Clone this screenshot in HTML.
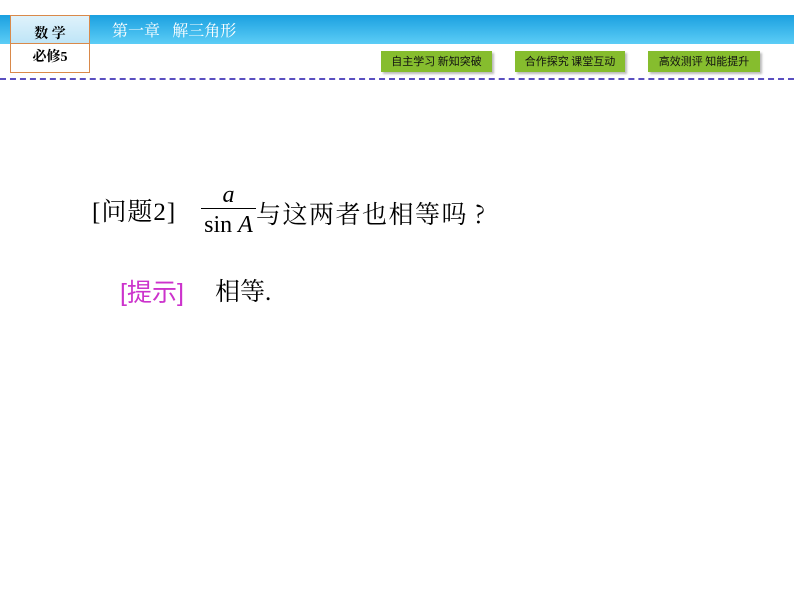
<!DOCTYPE html>
<html><head><meta charset="utf-8"><style>
body{margin:0;width:794px;height:596px;background:#fff;position:relative;overflow:hidden;font-family:"Liberation Serif","Noto Serif CJK SC",serif}
.a{position:absolute;white-space:nowrap}
.bar{left:0;top:15px;width:794px;height:29px;background:linear-gradient(#1ba0e0,#5ccdf6)}
.box{left:10px;top:15px;width:78px;height:56px;border:1px solid #d9894a;background:#fff}
.btn{top:51px;height:21px;background:#86bd2e;font:11px "Noto Sans CJK SC",sans-serif;color:#111;text-align:center;line-height:21px;box-shadow:2px 2px 2px #bbb}
</style></head><body>
<div class="a bar"></div>
<div class="a box">
<div style="height:27px;background:linear-gradient(#dff2fb,#bfe5f7);border-bottom:1px solid #d9894a;text-align:center;font:bold 14px 'Noto Serif CJK SC',serif;line-height:34px">数 学</div>
<div style="text-align:center;font:bold 14px 'Liberation Serif','Noto Serif CJK SC',serif;line-height:28px">必修5</div>
</div>
<div class="a" style="left:112px;top:17px;color:#fff;font:16px 'Noto Serif CJK SC',serif;line-height:26px">第一章&nbsp;&nbsp;&nbsp;解三角形</div>
<div class="a btn" style="left:381px;width:111px">自主学习 新知突破</div>
<div class="a btn" style="left:515px;width:110px">合作探究 课堂互动</div>
<div class="a btn" style="left:648px;width:112px">高效测评 知能提升</div>
<div class="a" style="left:0;top:78px;width:794px;border-top:2px dashed #5a4fc0"></div>
<div class="a" style="left:92px;top:197px;font-size:25px;line-height:32px;letter-spacing:1px">[问题2]</div>
<div class="a" style="left:201px;top:181px;width:55px;text-align:center;font-size:24px;line-height:28px;font-style:italic">a</div>
<div class="a" style="left:201px;top:208px;width:55px;border-top:1px solid #000"></div>
<div class="a" style="left:201px;top:210px;width:55px;text-align:center;font-size:24px;line-height:30px">sin <i>A</i></div>
<div class="a" style="left:256px;top:197px;font:25px 'Noto Serif CJK SC',serif;line-height:32px;letter-spacing:1.5px">与这两者也相等吗<span style="display:inline-block;width:25px;text-align:center">?</span></div>
<div class="a" style="left:120px;top:277px;font-size:25px;line-height:32px;color:#cc33cc;font-family:'Liberation Sans','Noto Sans CJK SC',sans-serif">[提示]</div>
<div class="a" style="left:215px;top:277px;font-size:25px;line-height:32px">相等.</div>
</body></html>
